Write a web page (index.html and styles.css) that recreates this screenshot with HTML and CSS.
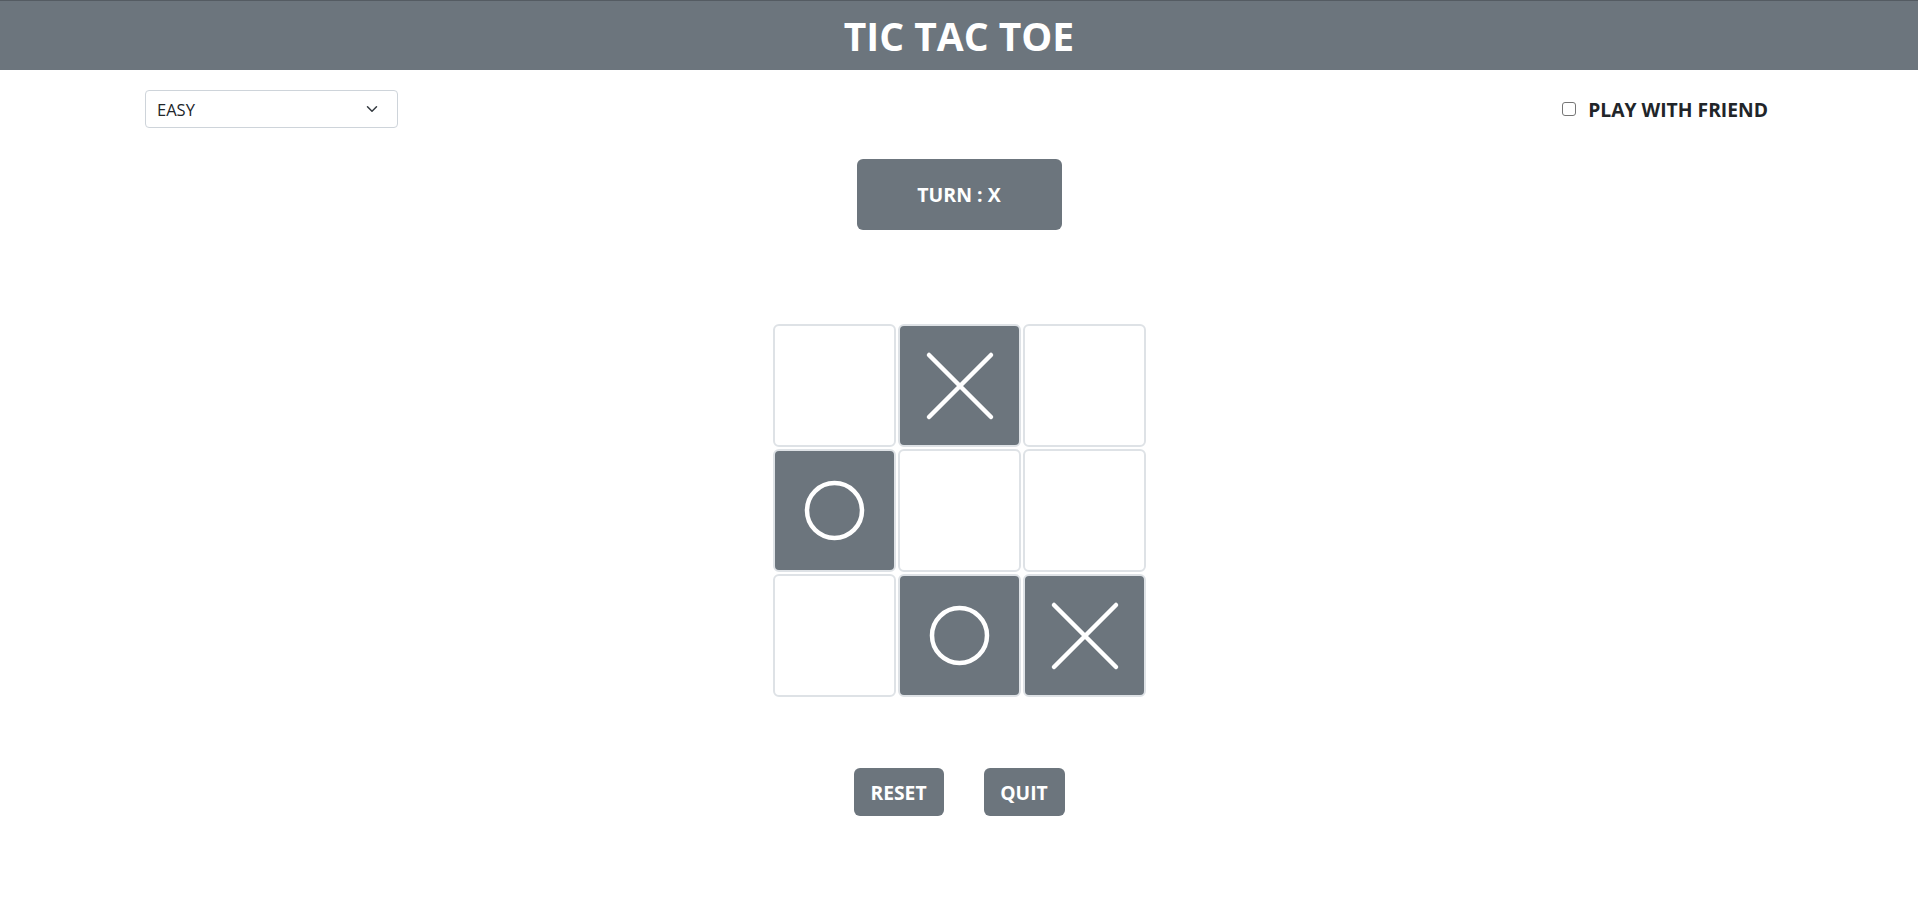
FILE: index.html
```html
<!DOCTYPE html>
<html>
<head>
<meta charset="utf-8">
<title>Tic Tac Toe</title>
<link rel="stylesheet" href="styles.css">
</head>
<body>
<header class="topbar"><h1 class="title">TIC TAC TOE</h1></header>
<div class="controls">
  <div class="select"><span>EASY</span>
    <svg class="chev" width="16" height="12" viewBox="0 0 16 16"><path d="M2 5l6 6 6-6" fill="none" stroke="#343a40" stroke-width="2" stroke-linecap="round" stroke-linejoin="round"/></svg>
  </div>
  <label class="friend"><span class="box"></span>PLAY WITH FRIEND</label>
</div>
<div class="turn">TURN : X</div>
<div class="board">
  <div class="cell"></div>
  <div class="cell filled"><svg viewBox="0 0 123 123"><path d="M31 31L93 93M93 31L31 93" stroke="#fff" stroke-width="4.5" stroke-linecap="round"/></svg></div>
  <div class="cell"></div>
  <div class="cell filled"><svg viewBox="0 0 123 123"><circle cx="61.5" cy="61.5" r="27.5" fill="none" stroke="#fff" stroke-width="4.5"/></svg></div>
  <div class="cell"></div>
  <div class="cell"></div>
  <div class="cell"></div>
  <div class="cell filled"><svg viewBox="0 0 123 123"><circle cx="61.5" cy="61.5" r="27.5" fill="none" stroke="#fff" stroke-width="4.5"/></svg></div>
  <div class="cell filled"><svg viewBox="0 0 123 123"><path d="M31 31L93 93M93 31L31 93" stroke="#fff" stroke-width="4.5" stroke-linecap="round"/></svg></div>
</div>
<div class="actions">
  <button class="btn reset">RESET</button>
  <button class="btn quit">QUIT</button>
</div>
</body>
</html>
```
FILE: styles.css
```css
* { box-sizing: border-box; }
body {
  margin: 0;
  font-family: "Open Sans", "Noto Sans", sans-serif;
  color: #212529;
  background: #fff;
}
.topbar {
  height: 70px;
  background: #6c757d;
  border-top: 1px solid #545b62;
  display: flex;
  align-items: center;
  justify-content: center;
}
.title {
  margin: 0;
  color: #fff;
  font-size: 39px;
  font-weight: 700;
  line-height: 1;
  letter-spacing: 0;
}
.controls {
  display: flex;
  justify-content: space-between;
  align-items: center;
  padding: 0 150px 0 145px;
  margin-top: 20px;
}
.select {
  width: 253px;
  height: 38px;
  border: 1px solid #ced4da;
  border-radius: 4px;
  display: flex;
  align-items: center;
  justify-content: space-between;
  padding: 0 17px 0 11px;
  font-size: 16.5px;
  color: #212529;
}
.friend {
  display: flex;
  align-items: center;
  font-size: 19.3px;
  font-weight: 700;
  gap: 12px;
}
.box {
  width: 14px;
  height: 14px;
  border: 1px solid #767676;
  border-radius: 3px;
  display: inline-block;
}
.turn {
  width: 205px;
  height: 71px;
  margin: 31px auto 0;
  background: #6c757d;
  color: #fff;
  border-radius: 6px;
  display: flex;
  align-items: center;
  justify-content: center;
  font-weight: 700;
  font-size: 19.5px;
}
.board {
  display: grid;
  grid-template-columns: repeat(3, 123px);
  grid-auto-rows: 123px;
  gap: 2px;
  width: 373px;
  margin: 94px auto 0;
}
.cell {
  border: 2px solid #dee2e6;
  border-radius: 6px;
  background: #fff;
}
.cell.filled { background: #6c757d; }
.cell svg { display: block; margin: -2px; width: 123px; height: 123px; }
.actions {
  display: flex;
  justify-content: center;
  gap: 40px;
  margin-top: 71px;
}
.btn {
  height: 48px;
  border: 0;
  border-radius: 6px;
  background: #6c757d;
  color: #fff;
  font-family: "Open Sans", "Noto Sans", sans-serif;
  font-weight: 700;
  font-size: 19.3px;
  padding: 0;
}
.reset { width: 90px; }
.quit { width: 81px; }
```
